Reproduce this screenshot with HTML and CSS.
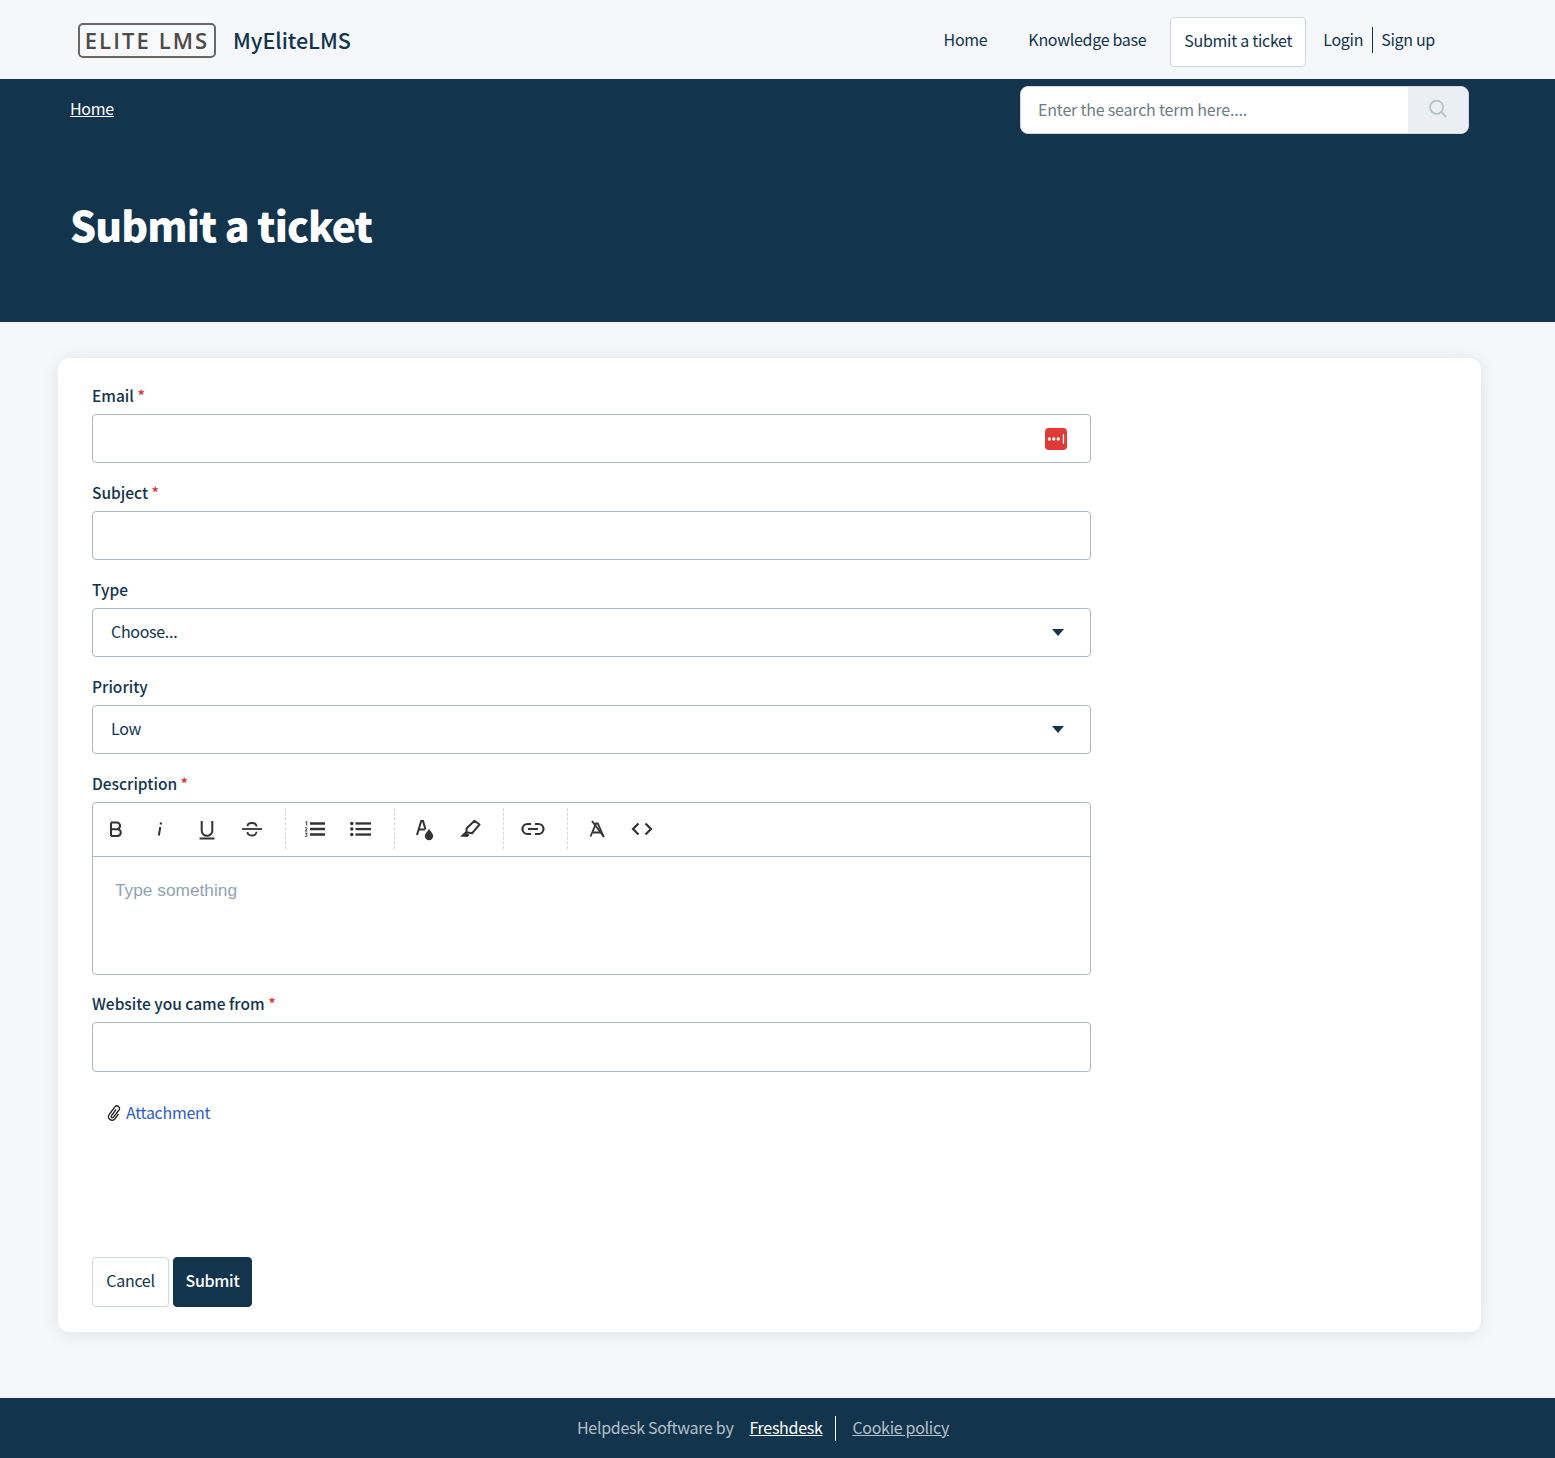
FILE: index.html
```html
<!DOCTYPE html>
<html lang="en">
<head>
<meta charset="utf-8">
<title>Submit a ticket</title>
<link rel="stylesheet" href="styles.css">
</head>
<body>
<header class="topbar">
  <a class="brand" href="#">
    <span class="logo">ELITE LMS</span>
    <span class="brand-name">MyEliteLMS</span>
  </a>
  <nav class="nav">
    <a class="nav-link nav-home" href="#">Home</a>
    <a class="nav-link nav-kb" href="#">Knowledge base</a>
    <a class="nav-button" href="#">Submit a ticket</a>
    <a class="nav-link nav-login" href="#">Login</a>
    <a class="nav-link nav-signup" href="#">Sign up</a>
  </nav>
</header>

<section class="hero">
  <div class="hero-top">
    <a class="crumb" href="#">Home</a>
    <form class="search">
      <input class="search-input" type="text" placeholder="Enter the search term here....">
      <span class="search-btn">
        <svg width="20" height="20" viewBox="0 0 20 20" fill="none" stroke="#b4bfc9" stroke-width="1.7"><circle cx="8.6" cy="8.2" r="6.6"/><path d="M13.4 13l4.400 4.600" stroke-linecap="round"/></svg>
      </span>
    </form>
  </div>
  <h1 class="hero-title">Submit a ticket</h1>
</section>

<main class="card">
  <form class="ticket">
    <div class="field">
      <label class="label">Email <span class="req">*</span></label>
      <div class="control">
        <input class="input" type="text">
        <svg class="pw-icon" width="22" height="22" viewBox="0 0 23 23"><rect width="23" height="23" rx="4" fill="#de3a36"/><g fill="#fff"><circle cx="4.600" cy="11.500" r="1.700"/><circle cx="9.200" cy="11.500" r="1.700"/><circle cx="13.800" cy="11.500" r="1.700"/><rect x="18.600" y="6.500" width="1.400" height="10"/></g></svg>
      </div>
    </div>
    <div class="field">
      <label class="label">Subject <span class="req">*</span></label>
      <div class="control"><input class="input" type="text"></div>
    </div>
    <div class="field">
      <label class="label">Type</label>
      <div class="control">
        <select class="input select"><option>Choose...</option></select>
        <svg class="caret" width="12" height="7" viewBox="0 0 12 7"><path d="M0 0h12L6 7z" fill="#12344d"/></svg>
      </div>
    </div>
    <div class="field">
      <label class="label">Priority</label>
      <div class="control">
        <select class="input select"><option>Low</option></select>
        <svg class="caret" width="12" height="7" viewBox="0 0 12 7"><path d="M0 0h12L6 7z" fill="#12344d"/></svg>
      </div>
    </div>
    <div class="field field-editor">
      <label class="label">Description <span class="req">*</span></label>
      <div class="editor">
        <div class="toolbar">
          <div class="tool-group">
            <span class="tool"><svg width="24" height="24" viewBox="0 0 24 24" fill="none" stroke="#333" stroke-width="2.100"><path d="M7 5.500v13.500M7 5.500h5.700a3.300 3.300 0 0 1 0 6.700H7M7 12.200h6.400a3.400 3.400 0 0 1 0 6.800H7"/></svg></span>
            <span class="tool"><svg width="24" height="24" viewBox="0 0 24 24" fill="none" stroke="#333" stroke-width="2"><path d="M11.300 10l-1.500 8.500"/><path d="M12 5.500l-.3 2"/></svg></span>
            <span class="tool"><svg width="24" height="24" viewBox="0 0 24 24" fill="none" stroke="#333" stroke-width="2"><path d="M6.700 4v9.500a5.300 5.300 0 0 0 10.600 0V4"/><path d="M4.500 21.500h15"/></svg></span>
            <span class="tool"><svg width="24" height="24" viewBox="0 0 24 24" fill="none" stroke="#333" stroke-width="1.800"><path d="M2 12h20"/><path d="M16.500 9.500c0-2.200-2-3.500-4.500-3.500S7.500 7.200 7.500 9.200"/><path d="M16.500 14.800c0 2.200-2 3.700-4.500 3.700s-4.500-1.400-4.500-3.500"/></svg></span>
          </div>
          <div class="tool-group">
            <span class="tool"><svg width="24" height="24" viewBox="0 0 24 24" fill="none" stroke="#333"><path d="M7 6.500h15M7 12h15M7 17.500h15" stroke-width="2.300"/><path d="M2.500 5.200l1.200-.7v4M2 11.200c.7-1 2.500-.5 1.800.8l-1.800 2h2.400M2.200 16.200h2l-1.100 1.500c1.500 0 1.500 2.300-1 1.800" stroke-width="1"/></svg></span>
            <span class="tool"><svg width="24" height="24" viewBox="0 0 24 24" fill="#333"><rect x="6.500" y="5.300" width="15.500" height="2.300"/><rect x="6.500" y="10.900" width="15.500" height="2.300"/><rect x="6.500" y="16.400" width="15.500" height="2.300"/><circle cx="2.800" cy="6.500" r="1.700"/><circle cx="2.800" cy="12" r="1.700"/><circle cx="2.800" cy="17.500" r="1.700"/></svg></span>
          </div>
          <div class="tool-group">
            <span class="tool"><svg width="24" height="24" viewBox="0 0 24 24"><path d="M5 18L9.200 4h1.800L13.500 12.500M6.800 12.500h6" fill="none" stroke="#333" stroke-width="2"/><path d="M17 12c1.500 2.500 4.200 4.700 4.200 7a4.200 4.200 0 0 1-8.400 0c0-2.300 2.700-4.500 4.200-7z" fill="#333"/></svg></span>
            <span class="tool"><svg width="24" height="24" viewBox="0 0 24 24"><path d="M8.500 11.500L16.500 3.800l5 3.700-7.500 8.800-5.500-1z" fill="none" stroke="#333" stroke-width="2" stroke-linejoin="round"/><path d="M7.500 14.500l4 3.500-2 2-7.500-.5z" fill="#333"/></svg></span>
          </div>
          <div class="tool-group">
            <span class="tool"><svg width="24" height="24" viewBox="0 0 24 24" fill="none" stroke="#333" stroke-width="2.200"><path d="M10 7H6.500a5 5 0 0 0 0 10H10M14 7h3.500a5 5 0 0 1 0 10H14M7 12h10"/></svg></span>
          </div>
          <div class="tool-group tool-group-last">
            <span class="tool"><svg width="24" height="24" viewBox="0 0 24 24" fill="none" stroke="#333" stroke-width="1.800"><path d="M5.500 19.500L11 6.500h1.800l5.700 13M8 15.500h8"/><path d="M7 4l12 16"/></svg></span>
            <span class="tool"><svg width="24" height="24" viewBox="0 0 24 24" fill="none" stroke="#333" stroke-width="2.200"><path d="M8.500 6.500L3 12l5.500 5.500M15.500 6.500L21 12l-5.500 5.500"/></svg></span>
          </div>
        </div>
        <div class="editor-body">Type something</div>
      </div>
    </div>
    <div class="field">
      <label class="label">Website you came from <span class="req">*</span></label>
      <div class="control"><input class="input input-tall" type="text"></div>
    </div>
    <a class="attach" href="#">
      <svg width="14" height="16" viewBox="0 0 14 16" fill="none" stroke="#222" stroke-width="1.300"><path d="M9 4.500L4.200 11a1.300 1.300 0 0 0 2 1.500L12 5a2.600 2.600 0 0 0-4-3.300L2.200 9.500a3.600 3.600 0 0 0 5.600 4.500L11.500 9"/></svg>
      <span class="attach-text">Attachment</span>
    </a>
    <div class="actions">
      <a class="btn btn-cancel" href="#">Cancel</a>
      <a class="btn btn-submit" href="#">Submit</a>
    </div>
  </form>
</main>

<footer class="footer">
  <span class="foot-text">Helpdesk Software by</span>
  <a class="foot-fresh" href="#">Freshdesk</a>
  <a class="foot-cookie" href="#">Cookie policy</a>
</footer>
</body>
</html>
```

FILE: styles.css
```css
* { box-sizing: border-box; }
html, body { margin: 0; padding: 0; }
body {
  background: #f5f7f9;
  color: #12344d;
  font-family: "Noto Sans CJK SC", "Noto Sans", sans-serif;
  font-size: 16px;
  letter-spacing: -0.3px;
  line-height: 24px;
}
a { color: inherit; text-decoration: none; }

.topbar {
  height: 79px;
  display: flex;
  align-items: center;
  justify-content: space-between;
  padding: 0 120px 0 78px;
}
.brand { display: flex; align-items: center; gap: 17px; }
.logo {
  width: 138px;
  height: 35px;
  margin-top: 1px;
  border: 2px solid #6b6765;
  border-radius: 5px;
  background: #f8f9fa;
  color: #4d4a47;
  font-family: "Open Sans", sans-serif;
  font-size: 22px;
  font-weight: 600;
  line-height: 31px;
  letter-spacing: 2.100px;
  text-align: center;
  white-space: nowrap;
}
.brand-name { font-size: 21.500px; font-weight: 500; line-height: 30px; letter-spacing: -0.05px; }
.nav { display: flex; align-items: center; }
.nav-home { margin-right: 41px; }
.nav-kb { margin-right: 24px; }
.nav-button {
  width: 136px;
  height: 50px;
  margin: 5px 17px 0 0;
  background: #fff;
  border: 1px solid #cfd7df;
  border-radius: 4px;
  line-height: 44px;
  text-align: center;
}
.nav-login { padding-right: 9px; border-right: 1px solid #12344d; }
.nav-signup { padding-left: 8px; }
.nav-link { height: 26px; line-height: 24px; }

.hero { height: 243px; background: #12344d; padding: 7px 86px 0 70px; }
.hero-top { display: flex; justify-content: space-between; align-items: flex-start; }
.crumb { color: #fff; text-decoration: underline; margin-top: 10px; line-height: 24px; }
.search {
  width: 449px;
  height: 48px;
  display: flex;
  background: #fff;
  border: 1px solid #cfd7df;
  border-radius: 8px;
  overflow: hidden;
}
.search-input {
  flex: 1;
  min-width: 0;
  border: 0;
  outline: 0;
  padding: 0 17px 2px;
  font: inherit;
  letter-spacing: -0.2px;
  color: #12344d;
  background: #fff;
}
.search-input::placeholder { color: #6f7c87; opacity: 1; }
.search-btn {
  width: 60px;
  background: #ebeff3;
  display: flex;
  align-items: center;
  justify-content: center;
  padding: 0 0 2px;
}
.hero-title {
  margin: 62px 0 0;
  color: #fff;
  font-size: 41px;
  font-weight: 900;
  letter-spacing: -0.9px;
  line-height: 56px;
}

.card {
  margin: 36px 74px 66px 58px;
  height: 974px;
  background: #fff;
  border-radius: 12px;
  box-shadow: 0 2px 18px rgba(18, 52, 77, .09);
  padding: 26px 34px 25px;
}
.ticket { width: 999px; height: 100%; display: flex; flex-direction: column; }
.field { margin-bottom: 18px; }
.field-editor { margin-bottom: 17px; }
.label {
  display: block;
  height: 30px;
  font-weight: 500;
  font-size: 15.500px;
  letter-spacing: 0;
  line-height: 22px;
}
.req { color: #d72d30; }
.control { position: relative; }
.input {
  display: block;
  width: 100%;
  height: 49px;
  padding: 0 18px;
  border: 1px solid #adb8c2;
  border-radius: 4px;
  background: #fff;
  color: #12344d;
  font: inherit;
  letter-spacing: inherit;
  outline: 0;
}
.input-tall { height: 50px; }
.select { appearance: none; -webkit-appearance: none; padding-bottom: 4px; }
.pw-icon { position: absolute; right: 24px; top: 14px; }
.caret { position: absolute; right: 27px; top: 21px; }

.editor { height: 173px; border: 1px solid #adb8c2; border-radius: 4px; }
.toolbar {
  height: 54px;
  display: flex;
  align-items: center;
  padding-bottom: 2px;
  border-bottom: 1px solid #adb8c2;
}
.tool-group {
  height: 41px;
  display: flex;
  align-items: center;
  padding: 0 10.750px 0 6.250px;
  border-right: 1px dashed #cfd7df;
}
.tool-group:first-child { padding-left: 0; padding-right: 10px; }
.tool-group-last { border-right: 0; }
.tool { width: 45.500px; display: flex; justify-content: center; }
.editor-body {
  padding: 22px 22px 0;
  color: #92a2b1;
  font-family: "Liberation Sans", Arial, sans-serif;
  font-size: 17.300px;
  letter-spacing: 0;
  line-height: 22px;
}
.attach {
  display: flex;
  align-items: center;
  gap: 5px;
  margin: 8px 0 0 15px;
  color: #2c5cc5;
  height: 30px;
}
.attach-text { margin-bottom: 2px; }
.actions { margin-top: auto; display: flex; gap: 4px; }
.btn {
  height: 50px;
  line-height: 44px;
  border-radius: 4px;
  text-align: center;
  border: 1px solid #cfd7df;
}
.btn-cancel { width: 77px; background: #fff; }
.btn-submit { width: 79px; background: #12344d; border-color: #12344d; color: #fff; font-weight: 500; }

.footer {
  height: 60px;
  background: #12344d;
  display: flex;
  align-items: center;
  justify-content: center;
  padding-right: 28px;
  color: #b5c0ca;
}
.foot-text { margin: 0 16px 2px -1px; }
.foot-fresh { height: 25px; color: #fff; text-decoration: underline; padding-right: 13px; border-right: 1px solid #fff; line-height: 23px; }
.foot-cookie { margin: 0 0 2px 16px; color: #b5c0ca; text-decoration: underline; }
```
